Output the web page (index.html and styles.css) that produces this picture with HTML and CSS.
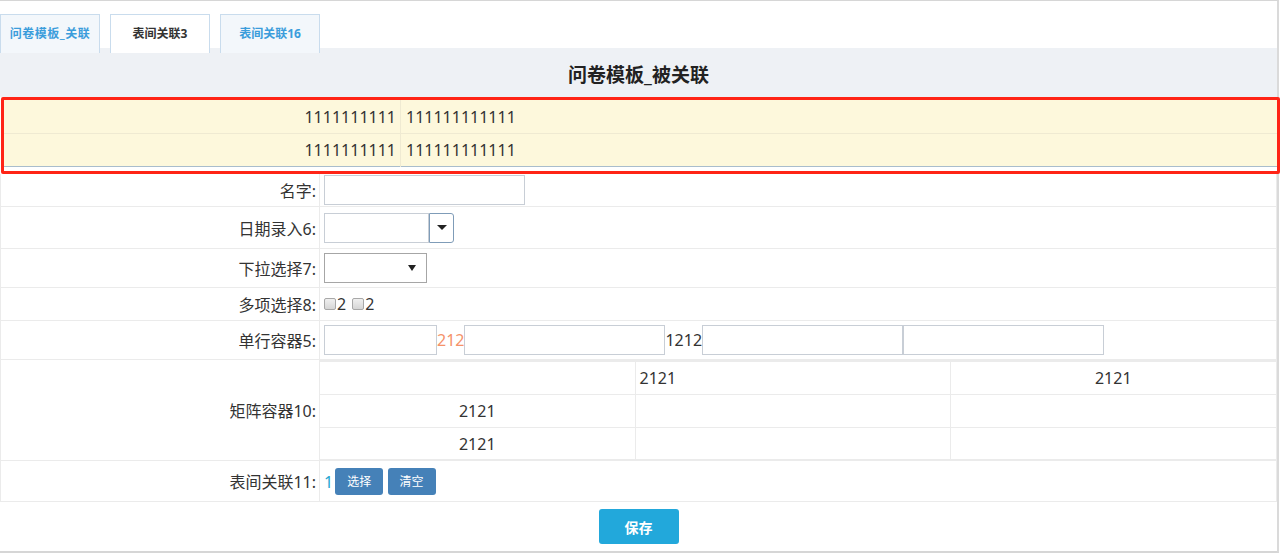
FILE: index.html
```html
<!DOCTYPE html>
<html lang="zh-CN">
<head>
    <meta charset="UTF-8">
    <title>问卷模板_被关联</title>
    <link rel="stylesheet" href="styles.css">
</head>
<body>
    <div class="page">
        <div class="tabs">
            <div class="tab">问卷模板_关联</div>
            <div class="tab active">表间关联3</div>
            <div class="tab">表间关联16</div>
        </div>
        <div class="form-title">问卷模板_被关联</div>

        <div class="highlight">
            <table class="linked">
                <tr>
                    <td class="linked-label">1111111111</td>
                    <td>111111111111</td>
                </tr>
                <tr>
                    <td class="linked-label">1111111111</td>
                    <td>111111111111</td>
                </tr>
            </table>
        </div>

        <table class="form">
            <tr class="row-33">
                <td class="label">名字:</td>
                <td><input type="text" class="txt w200"></td>
            </tr>
            <tr class="row-42">
                <td class="label">日期录入6:</td>
                <td>
                    <div class="date-group">
                        <input type="text" class="txt w105">
                        <button class="date-btn"><span class="caret"></span></button>
                    </div>
                </td>
            </tr>
            <tr class="row-39">
                <td class="label">下拉选择7:</td>
                <td>
                    <div class="select">
                        <span class="caret small"></span>
                    </div>
                </td>
            </tr>
            <tr class="row-33">
                <td class="label">多项选择8:</td>
                <td>
                    <label class="check"><input type="checkbox">2</label>
                    <label class="check"><input type="checkbox">2</label>
                </td>
            </tr>
            <tr class="row-39">
                <td class="label">单行容器5:</td>
                <td class="inline-row">
                    <input type="text" class="txt w113"><span class="orange">212</span><input type="text" class="txt w201"><span>1212</span><input type="text" class="txt w201"><input type="text" class="txt w201">
                </td>
            </tr>
            <tr>
                <td class="label">矩阵容器10:</td>
                <td class="matrix-cell">
                    <table class="matrix">
                        <colgroup>
                            <col class="col-a">
                            <col class="col-a">
                            <col>
                        </colgroup>
                        <tr>
                            <td></td>
                            <td class="left">2121</td>
                            <td>2121</td>
                        </tr>
                        <tr>
                            <td>2121</td>
                            <td></td>
                            <td></td>
                        </tr>
                        <tr class="last">
                            <td>2121</td>
                            <td></td>
                            <td></td>
                        </tr>
                    </table>
                </td>
            </tr>
            <tr class="row-41">
                <td class="label">表间关联11:</td>
                <td>
                    <span class="link-count">1</span>
                    <button class="btn-small">选择</button>
                    <button class="btn-small">清空</button>
                </td>
            </tr>
        </table>

        <div class="actions">
            <button class="btn-save">保存</button>
        </div>
    </div>
</body>
</html>
```

FILE: styles.css
```css
body {
    margin: 0;
    padding: 0;
    font-family: "Noto Sans", "Noto Sans CJK SC", sans-serif;
    font-size: 16px;
    color: #333;
    background: #fff;
}

.page {
    width: 1277px;
    height: 550px;
    border-top: 1px solid #d6d6d6;
    border-right: 2px solid #dadada;
    border-bottom: 2px solid #d6d6d6;
    overflow: visible;
}

/* tabs */
.tabs {
    display: flex;
    gap: 10px;
    height: 47px;
    padding-top: 13px;
    box-sizing: border-box;
}

.tab {
    position: relative;
    z-index: 1;
    width: 100px;
    height: 39px;
    box-sizing: border-box;
    border: 1px solid #c9dced;
    border-bottom: none;
    background: #f3f7fb;
    color: #3b9ddb;
    font-size: 12px;
    font-weight: bold;
    line-height: 38px;
    text-align: center;
}

.tab:first-child {
    letter-spacing: 0.5px;
}

.tab.active {
    background: #fff;
    color: #333;
}

.form-title {
    height: 49px;
    background: #eef1f5;
    text-align: center;
    font-size: 19px;
    font-weight: bold;
    line-height: 54px;
    color: #222;
}

/* linked rows */
.highlight {
    margin: 0 -3px 0 1px;
    border: 3px solid #ff2416;
    border-radius: 2px;
    padding-bottom: 4px;
    background: #fff;
}

.linked {
    width: 100%;
    border-collapse: collapse;
    background: #fdf8dc;
    border-bottom: 1px solid #a9bdcc;
}

.linked td {
    height: 33px;
    padding: 0 0 0 5px;
    border-bottom: 1px solid #efead2;
}

.linked tr:last-child td {
    height: 32px;
    border-bottom: none;
}

.linked .linked-label {
    width: 392px;
    text-align: right;
    padding: 0 4px 0 0;
    border-right: 1px solid #efead2;
}

/* form table */
.form {
    width: 1277px;
    border-collapse: collapse;
    border-left: 1px solid #ebebeb;
    border-right: 1px solid #ebebeb;
}

.form > tbody > tr > td {
    border-bottom: 1px solid #ebebeb;
    padding: 0 0 0 4px;
    vertical-align: middle;
}

.form > tbody > tr > td.label {
    width: 315px;
    text-align: right;
    padding: 0 3px 0 0;
    border-right: 1px solid #ebebeb;
    white-space: nowrap;
}

.row-33 td { height: 32px; }
.row-39 td { height: 38px; }
.row-41 td { height: 40px; }
.row-42 td { height: 41px; }

.txt {
    height: 30px;
    box-sizing: border-box;
    border: 1px solid #c8ced6;
    margin: 0;
    padding: 0 6px;
    vertical-align: middle;
    font-family: inherit;
    font-size: 14px;
}

.w105 { width: 105px; }
.w113 { width: 113px; }
.w200 { width: 201px; }
.w201 { width: 201px; }

.date-group {
    display: flex;
}

.date-btn {
    width: 25px;
    height: 30px;
    margin: 0;
    padding: 0;
    border: 1px solid #7f9cb8;
    border-radius: 0 3px 3px 0;
    background: #fff;
    display: flex;
    align-items: center;
    justify-content: center;
}

.caret {
    display: inline-block;
    width: 0;
    height: 0;
    border-left: 5px solid transparent;
    border-right: 5px solid transparent;
    border-top: 5px solid #222;
}

.caret.small {
    border-left-width: 4px;
    border-right-width: 4px;
    border-top-width: 6px;
}

.select {
    width: 103px;
    height: 30px;
    box-sizing: border-box;
    border: 1px solid #a6a6a6;
    display: flex;
    align-items: center;
    justify-content: flex-end;
    padding-right: 10px;
}

.check {
    display: inline-flex;
    align-items: center;
    margin-right: 2px;
}

.check input {
    appearance: none;
    width: 12px;
    height: 12px;
    margin: 0 1px 0 0;
    border: 1px solid #a8a8a8;
    border-radius: 2px;
    background: linear-gradient(#f0f0f0, #d6d6d6);
}

.inline-row {
    white-space: nowrap;
}

.inline-row span {
    vertical-align: middle;
}

.orange {
    color: #f59269;
}

.matrix-cell {
    padding: 0 !important;
}

.matrix {
    width: 100%;
    table-layout: fixed;
    border-collapse: collapse;
    border-top: 2px solid #ebebeb;
}

.col-a {
    width: 315px;
}

.matrix td {
    height: 32px;
    text-align: center;
    border-right: 1px solid #ebebeb;
    border-bottom: 1px solid #ebebeb;
    padding: 0;
}

.matrix .last td {
    height: 31px;
}

.matrix td:last-child {
    border-right: none;
}

.matrix .left {
    text-align: left;
    padding-left: 4px;
}

.link-count {
    color: #1ea5cf;
    vertical-align: middle;
}

.btn-small {
    width: 48px;
    height: 27px;
    margin: 0 0 0 -2px;
    border: none;
    border-radius: 3px;
    background: #4581b8;
    color: #fff;
    font-family: inherit;
    font-size: 12px;
    vertical-align: middle;
}

.btn-small + .btn-small {
    margin-left: 0;
}

.actions {
    padding-top: 7px;
    text-align: center;
}

.btn-save {
    width: 80px;
    height: 35px;
    border: none;
    border-radius: 3px;
    background: #22a8db;
    color: #fff;
    font-family: inherit;
    font-size: 14px;
    font-weight: bold;
}
```
